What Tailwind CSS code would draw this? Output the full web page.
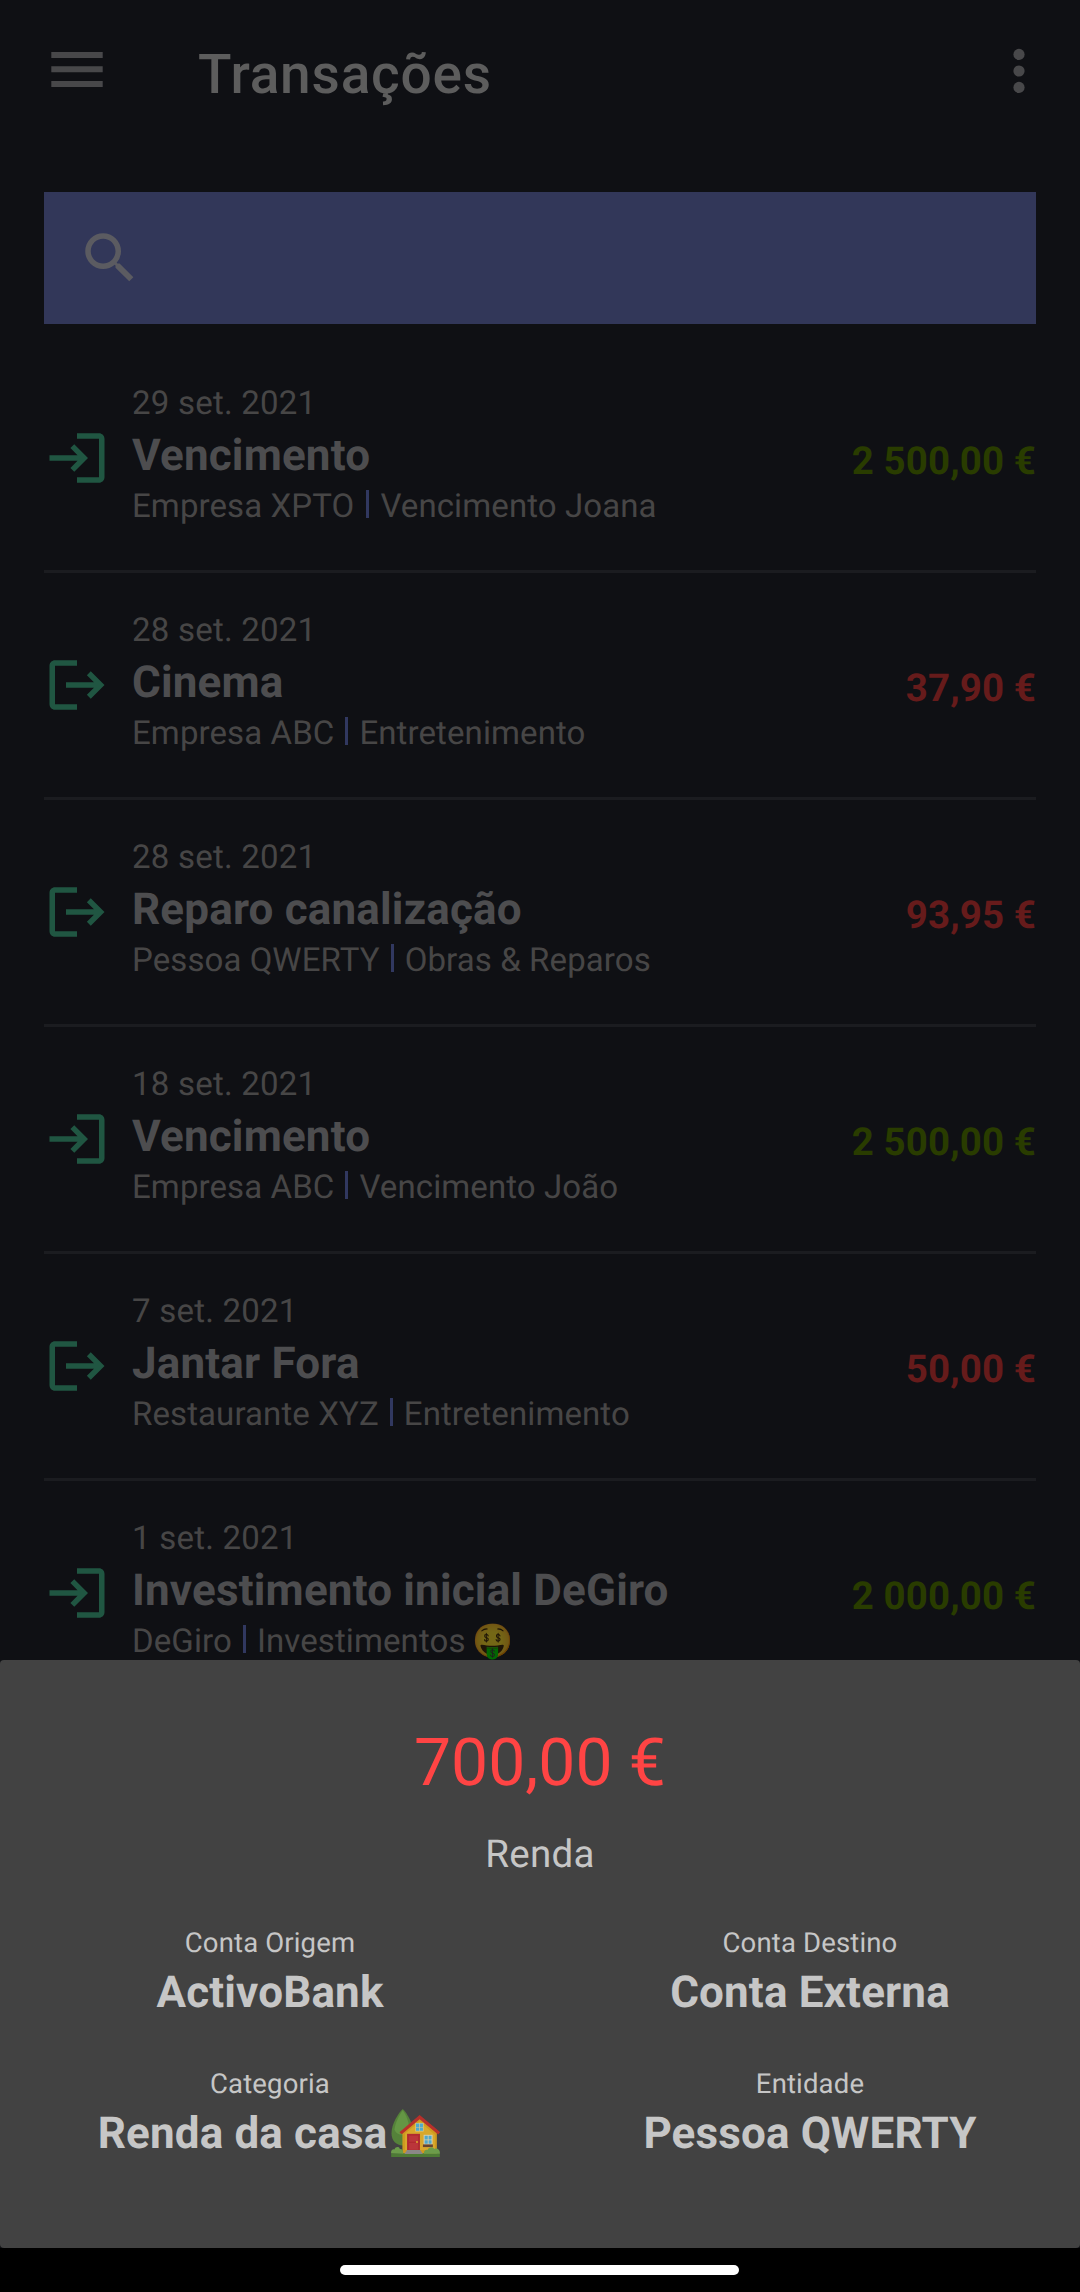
<!DOCTYPE html>
<html lang="pt">
<head>
<meta charset="utf-8">
<title>Transações</title>
<script src="https://cdn.jsdelivr.net/npm/@tailwindcss/browser@4"></script>
</head>
<body class="bg-black">
<div class="relative flex h-[2292px] w-[1080px] flex-col overflow-hidden bg-[#0f1014] font-['Roboto',sans-serif] [text-rendering:geometricPrecision]">
  <svg class="hidden">
    <symbol id="in" viewBox="0 0 24 24"><path d="M11 7L9.6 8.4L12.2 11H2V13H12.2L9.6 15.6L11 17L16 12L11 7M20 19H12V21H20C21.1 21 22 20.1 22 19V5C22 3.9 21.1 3 20 3H12V5H20V19Z"/></symbol>
    <symbol id="out" viewBox="0 0 24 24"><path d="M17 7L15.59 8.41L18.17 11H8V13H18.17L15.59 15.58L17 17L22 12M4 5H12V3H4C2.9 3 2 3.9 2 5V19C2 20.1 2.9 21 4 21H12V19H4V5Z"/></symbol>
  </svg>

  <header class="flex h-[192px] shrink-0 items-start pr-[55px] pl-[51px]">
    <svg class="mt-[52px] h-[36px] w-[52px] fill-[#48484a]" viewBox="0 0 52 36"><path d="M.3 0H51.7V5.9H.3zM.3 14.3H51.7V20.2H.3zM.3 29H51.7V34.9H.3z"/></svg>
    <h1 class="mt-[43px] ml-[95px] text-[55px] leading-[64px] font-medium tracking-[0.8px] text-[#5d5d5d]">Transações</h1>
    <svg class="mt-[48px] ml-auto h-[46px] w-[12px] fill-[#48484a]" viewBox="0 0 12 46"><circle cx="6" cy="6.4" r="5.6"/><circle cx="6" cy="23" r="5.6"/><circle cx="6" cy="39.4" r="5.6"/></svg>
  </header>

  <div class="mx-[44px] flex h-[132px] shrink-0 items-center bg-[#323759] pl-[33px]">
    <svg class="size-[66px] fill-[#5b5b61]" viewBox="0 0 24 24"><path d="M15.5 14h-.79l-.28-.27A6.471 6.471 0 0 0 16 9.5 6.5 6.5 0 1 0 9.5 16c1.61 0 3.09-.59 4.23-1.57l.27.28v.79l5 4.99L20.49 19l-4.99-5zm-6 0C7.01 14 5 11.99 5 9.5S7.01 5 9.5 5 14 7.01 14 9.5 11.99 14 9.5 14z"/></svg>
  </div>

  <main class="mx-[44px] mt-[22px] flex flex-col">
    <article class="flex h-[227px] items-start border-b-[3px] border-[#1b1c20]">
      <svg class="mt-[79px] size-[66px] fill-[#205642]"><use href="#in"/></svg>
      <div class="mt-[36px] ml-[22px] text-[33px] leading-[44px] tracking-[0.1px] text-[#474646]">
        <p class="tracking-[0.22px]">29 set. 2021</p>
        <h2 class="mt-[1px] mb-[2px] text-[44px] leading-[56px] font-bold tracking-[0.17px] text-[#4d4d4f]">Vencimento</h2>
        <p class="flex"><span>Empresa XPTO</span><i class="mt-[5px] mr-[11px] ml-[12px] h-[28px] w-[3px] bg-[#313860]"></i><span>Vencimento Joana</span></p>
      </div>
      <p class="mt-[94px] ml-auto text-[38.5px] leading-[44px] font-bold tracking-[0.1px] text-[#293c00]">2 500,00 €</p>
    </article>
    <article class="flex h-[227px] items-start border-b-[3px] border-[#1b1c20]">
      <svg class="mt-[79px] size-[66px] fill-[#205642]"><use href="#out"/></svg>
      <div class="mt-[36px] ml-[22px] text-[33px] leading-[44px] tracking-[0.1px] text-[#474646]">
        <p class="tracking-[0.22px]">28 set. 2021</p>
        <h2 class="mt-[1px] mb-[2px] text-[44px] leading-[56px] font-bold tracking-[0.17px] text-[#4d4d4f]">Cinema</h2>
        <p class="flex"><span>Empresa ABC</span><i class="mt-[5px] mr-[11px] ml-[11px] h-[28px] w-[3px] bg-[#313860]"></i><span>Entretenimento</span></p>
      </div>
      <p class="mt-[94px] ml-auto text-[38.5px] leading-[44px] font-bold tracking-[0.1px] text-[#661b1b]">37,90 €</p>
    </article>
    <article class="flex h-[227px] items-start border-b-[3px] border-[#1b1c20]">
      <svg class="mt-[79px] size-[66px] fill-[#205642]"><use href="#out"/></svg>
      <div class="mt-[36px] ml-[22px] text-[33px] leading-[44px] tracking-[0.1px] text-[#474646]">
        <p class="tracking-[0.22px]">28 set. 2021</p>
        <h2 class="mt-[1px] mb-[2px] text-[44px] leading-[56px] font-bold tracking-[0.17px] text-[#4d4d4f]">Reparo canalização</h2>
        <p class="flex"><span>Pessoa QWERTY</span><i class="mt-[5px] mr-[11px] ml-[11px] h-[28px] w-[3px] bg-[#313860]"></i><span>Obras &amp; Reparos</span></p>
      </div>
      <p class="mt-[94px] ml-auto text-[38.5px] leading-[44px] font-bold tracking-[0.1px] text-[#661b1b]">93,95 €</p>
    </article>
    <article class="flex h-[227px] items-start border-b-[3px] border-[#1b1c20]">
      <svg class="mt-[79px] size-[66px] fill-[#205642]"><use href="#in"/></svg>
      <div class="mt-[36px] ml-[22px] text-[33px] leading-[44px] tracking-[0.1px] text-[#474646]">
        <p class="tracking-[0.22px]">18 set. 2021</p>
        <h2 class="mt-[1px] mb-[2px] text-[44px] leading-[56px] font-bold tracking-[0.17px] text-[#4d4d4f]">Vencimento</h2>
        <p class="flex"><span>Empresa ABC</span><i class="mt-[5px] mr-[11px] ml-[11px] h-[28px] w-[3px] bg-[#313860]"></i><span>Vencimento João</span></p>
      </div>
      <p class="mt-[94px] ml-auto text-[38.5px] leading-[44px] font-bold tracking-[0.1px] text-[#293c00]">2 500,00 €</p>
    </article>
    <article class="flex h-[227px] items-start border-b-[3px] border-[#1b1c20]">
      <svg class="mt-[79px] size-[66px] fill-[#205642]"><use href="#out"/></svg>
      <div class="mt-[36px] ml-[22px] text-[33px] leading-[44px] tracking-[0.1px] text-[#474646]">
        <p class="tracking-[0.22px]">7 set. 2021</p>
        <h2 class="mt-[1px] mb-[2px] text-[44px] leading-[56px] font-bold tracking-[0.17px] text-[#4d4d4f]">Jantar Fora</h2>
        <p class="flex"><span>Restaurante XYZ</span><i class="mt-[5px] mr-[11px] ml-[11px] h-[28px] w-[3px] bg-[#313860]"></i><span>Entretenimento</span></p>
      </div>
      <p class="mt-[94px] ml-auto text-[38.5px] leading-[44px] font-bold tracking-[0.1px] text-[#661b1b]">50,00 €</p>
    </article>
    <article class="flex h-[227px] items-start">
      <svg class="mt-[79px] size-[66px] fill-[#205642]"><use href="#in"/></svg>
      <div class="mt-[36px] ml-[22px] text-[33px] leading-[44px] tracking-[0.1px] text-[#474646]">
        <p class="tracking-[0.22px]">1 set. 2021</p>
        <h2 class="mt-[1px] mb-[2px] text-[44px] leading-[56px] font-bold tracking-[0.17px] text-[#4d4d4f]">Investimento inicial DeGiro</h2>
        <p class="flex"><span>DeGiro</span><i class="mt-[5px] mr-[11px] ml-[11px] h-[28px] w-[3px] bg-[#313860]"></i><span>Investimentos</span><span class="ml-[7px] brightness-[.46]">🤑</span></p>
      </div>
      <p class="mt-[94px] ml-auto text-[38.5px] leading-[44px] font-bold tracking-[0.1px] text-[#293c00]">2 000,00 €</p>
    </article>
  </main>

  <!-- Transaction detail sheet, over the list -->
  <section class="absolute inset-x-0 top-[1660px] flex h-[588px] flex-col items-center rounded-[4px] bg-[#424242] pt-[65px] text-[#c6c6c6]">
    <p class="text-[66px] leading-[77px] text-[#ff4444]">700,00 €</p>
    <p class="mt-[30px] text-[38.5px] leading-[46px] tracking-[0.3px]">Renda</p>
    <div class="mt-[49px] grid w-full grid-cols-2 gap-y-[50px] text-center tracking-[0.15px]">
      <div>
        <p class="text-[27.5px] leading-[32px]">Conta Origem</p>
        <p class="mt-[7px] text-[44px] leading-[52px] font-bold">ActivoBank</p>
      </div>
      <div>
        <p class="text-[27.5px] leading-[32px]">Conta Destino</p>
        <p class="mt-[7px] text-[44px] leading-[52px] font-bold">Conta Externa</p>
      </div>
      <div>
        <p class="text-[27.5px] leading-[32px]">Categoria</p>
        <p class="mt-[7px] flex h-[52px] justify-center text-[44px] leading-[52px] font-bold"><span>Renda da casa</span>
          <svg class="mt-[2px] mr-[2px] ml-[4px] h-[48px] w-[49px]" viewBox="36 56 147 145">
            <path d="M71 56C84 68 103 100 103 130C103 152 90 166 71 166C52 166 37 152 37 130C37 100 58 68 71 56Z" fill="#55823a"/>
            <path d="M71 60C80 72 92 98 90 120C84 140 52 138 46 118C48 98 62 72 71 60Z" fill="#649644"/>
            <path d="M122 82L174 128V192H70V128Z" fill="#cf9a1f"/>
            <path d="M122 94L168 134V180H78V130Z" fill="#d8a82c"/>
            <path d="M122 74L184 126L178 133L122 87L68 132L61 126Z" fill="#b7302b"/>
            <path d="M109 98H134V124H109Z" fill="#d9c98c"/><path d="M111 100H121V110H111zM123 100H132V110H123zM111 112H121V122H111zM123 112H132V122H123z" fill="#4fa9cc"/>
            <path d="M84 131H123V181H84Z" fill="#b02a30"/><path d="M90 137H117V155H90zM90 159H117V179H90z" fill="#bb353a"/><circle cx="114" cy="156" r="3" fill="#dfa92d"/>
            <path d="M134 134H161V164H134Z" fill="#d9cfae"/><path d="M137 137H146.500V148H137zM149 137H158V148H149zM137 150.500H146.500V161H137zM149 150.500H158V161H149z" fill="#4fa9cc"/>
            <path d="M132 163H162V171H132Z" fill="#664532"/>
            <path d="M36 190H183V201H36Z" fill="#4d7a35"/>
            <path d="M36 190C34 180 42 176 46 178C49 169 61 169 62 177C70 175 74 184 72 191Z" fill="#6c9c4b"/>
            <path d="M135 191C134 181 142 178 146 180C149 169 163 169 166 177C175 172 185 180 183 191Z" fill="#6c9c4b"/>
            <path d="M84 180H124L132 192H76Z" fill="#8b8787"/>
          </svg>
        </p>
      </div>
      <div>
        <p class="text-[27.5px] leading-[32px]">Entidade</p>
        <p class="mt-[7px] text-[44px] leading-[52px] font-bold">Pessoa QWERTY</p>
      </div>
    </div>
  </section>

  <!-- System gesture bar -->
  <footer class="absolute inset-x-0 bottom-0 h-[44px] bg-black pt-[17px] pl-[340px]">
    <div class="h-[10px] w-[399px] rounded-full bg-white"></div>
  </footer>
</div>
</body>
</html>
